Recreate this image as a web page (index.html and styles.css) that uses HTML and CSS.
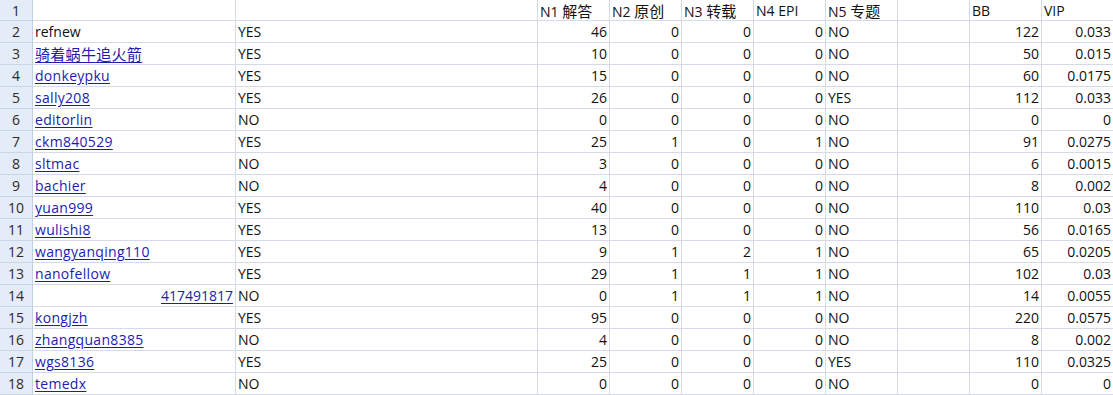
FILE: index.html
```html
<!DOCTYPE html>
<html lang="zh">
<head>
<meta charset="utf-8">
<title>Sheet</title>
<link rel="stylesheet" href="styles.css">
</head>
<body>
<div class="sheet">
  <div class="row first">
    <div class="rh">1</div><div class="c"></div><div class="c"></div>
    <div class="c">N1 <span class="cjk">解答</span></div><div class="c">N2 <span class="cjk">原创</span></div><div class="c">N3 <span class="cjk">转载</span></div><div class="c">N4 EPI</div><div class="c">N5 <span class="cjk">专题</span></div><div class="c"></div><div class="c">BB</div><div class="c">VIP</div>
  </div>
  <div class="row">
    <div class="rh">2</div><div class="c">refnew</div><div class="c">YES</div>
    <div class="c n">46</div><div class="c n">0</div><div class="c n">0</div><div class="c n">0</div><div class="c">NO</div><div class="c"></div><div class="c n">122</div><div class="c n">0.033</div>
  </div>
  <div class="row">
    <div class="rh">3</div><div class="c"><a class="lnk cjk">骑着蜗牛追火箭</a></div><div class="c">YES</div>
    <div class="c n">10</div><div class="c n">0</div><div class="c n">0</div><div class="c n">0</div><div class="c">NO</div><div class="c"></div><div class="c n">50</div><div class="c n">0.015</div>
  </div>
  <div class="row">
    <div class="rh">4</div><div class="c"><a class="lnk">donkeypku</a></div><div class="c">YES</div>
    <div class="c n">15</div><div class="c n">0</div><div class="c n">0</div><div class="c n">0</div><div class="c">NO</div><div class="c"></div><div class="c n">60</div><div class="c n">0.0175</div>
  </div>
  <div class="row">
    <div class="rh">5</div><div class="c"><a class="lnk">sally208</a></div><div class="c">YES</div>
    <div class="c n">26</div><div class="c n">0</div><div class="c n">0</div><div class="c n">0</div><div class="c">YES</div><div class="c"></div><div class="c n">112</div><div class="c n">0.033</div>
  </div>
  <div class="row">
    <div class="rh">6</div><div class="c"><a class="lnk">editorlin</a></div><div class="c">NO</div>
    <div class="c n">0</div><div class="c n">0</div><div class="c n">0</div><div class="c n">0</div><div class="c">NO</div><div class="c"></div><div class="c n">0</div><div class="c n">0</div>
  </div>
  <div class="row">
    <div class="rh">7</div><div class="c"><a class="lnk">ckm840529</a></div><div class="c">YES</div>
    <div class="c n">25</div><div class="c n">1</div><div class="c n">0</div><div class="c n">1</div><div class="c">NO</div><div class="c"></div><div class="c n">91</div><div class="c n">0.0275</div>
  </div>
  <div class="row">
    <div class="rh">8</div><div class="c"><a class="lnk">sltmac</a></div><div class="c">NO</div>
    <div class="c n">3</div><div class="c n">0</div><div class="c n">0</div><div class="c n">0</div><div class="c">NO</div><div class="c"></div><div class="c n">6</div><div class="c n">0.0015</div>
  </div>
  <div class="row">
    <div class="rh">9</div><div class="c"><a class="lnk">bachier</a></div><div class="c">NO</div>
    <div class="c n">4</div><div class="c n">0</div><div class="c n">0</div><div class="c n">0</div><div class="c">NO</div><div class="c"></div><div class="c n">8</div><div class="c n">0.002</div>
  </div>
  <div class="row">
    <div class="rh">10</div><div class="c"><a class="lnk">yuan999</a></div><div class="c">YES</div>
    <div class="c n">40</div><div class="c n">0</div><div class="c n">0</div><div class="c n">0</div><div class="c">NO</div><div class="c"></div><div class="c n">110</div><div class="c n">0.03</div>
  </div>
  <div class="row">
    <div class="rh">11</div><div class="c"><a class="lnk">wulishi8</a></div><div class="c">YES</div>
    <div class="c n">13</div><div class="c n">0</div><div class="c n">0</div><div class="c n">0</div><div class="c">NO</div><div class="c"></div><div class="c n">56</div><div class="c n">0.0165</div>
  </div>
  <div class="row">
    <div class="rh">12</div><div class="c"><a class="lnk">wangyanqing110</a></div><div class="c">YES</div>
    <div class="c n">9</div><div class="c n">1</div><div class="c n">2</div><div class="c n">1</div><div class="c">NO</div><div class="c"></div><div class="c n">65</div><div class="c n">0.0205</div>
  </div>
  <div class="row">
    <div class="rh">13</div><div class="c"><a class="lnk">nanofellow</a></div><div class="c">YES</div>
    <div class="c n">29</div><div class="c n">1</div><div class="c n">1</div><div class="c n">1</div><div class="c">NO</div><div class="c"></div><div class="c n">102</div><div class="c n">0.03</div>
  </div>
  <div class="row">
    <div class="rh">14</div><div class="c n"><a class="lnk num">417491817</a></div><div class="c">NO</div>
    <div class="c n">0</div><div class="c n">1</div><div class="c n">1</div><div class="c n">1</div><div class="c">NO</div><div class="c"></div><div class="c n">14</div><div class="c n">0.0055</div>
  </div>
  <div class="row">
    <div class="rh">15</div><div class="c"><a class="lnk">kongjzh</a></div><div class="c">YES</div>
    <div class="c n">95</div><div class="c n">0</div><div class="c n">0</div><div class="c n">0</div><div class="c">NO</div><div class="c"></div><div class="c n">220</div><div class="c n">0.0575</div>
  </div>
  <div class="row">
    <div class="rh">16</div><div class="c"><a class="lnk">zhangquan8385</a></div><div class="c">NO</div>
    <div class="c n">4</div><div class="c n">0</div><div class="c n">0</div><div class="c n">0</div><div class="c">NO</div><div class="c"></div><div class="c n">8</div><div class="c n">0.002</div>
  </div>
  <div class="row">
    <div class="rh">17</div><div class="c"><a class="lnk">wgs8136</a></div><div class="c">YES</div>
    <div class="c n">25</div><div class="c n">0</div><div class="c n">0</div><div class="c n">0</div><div class="c">YES</div><div class="c"></div><div class="c n">110</div><div class="c n">0.0325</div>
  </div>
  <div class="row">
    <div class="rh">18</div><div class="c"><a class="lnk">temedx</a></div><div class="c">NO</div>
    <div class="c n">0</div><div class="c n">0</div><div class="c n">0</div><div class="c n">0</div><div class="c">NO</div><div class="c"></div><div class="c n">0</div><div class="c n">0</div>
  </div>
</div>
</body>
</html>
```
FILE: styles.css
```css
html, body {
  margin: 0;
  padding: 0;
  background: #ffffff;
}
.sheet {
  width: 1114px;
  font-family: "Open Sans", "Noto Sans CJK SC", sans-serif;
  font-size: 14px;
  color: #111111;
}
.row {
  display: grid;
  grid-template-columns: 33px 203px 302px repeat(8, 72px);
  height: 22px;
}
.row.first {
  height: 21px;
}
.c, .rh {
  box-sizing: border-box;
  border-right: 1px solid #d4dae6;
  border-bottom: 1px solid #d4dae6;
  display: block;
  text-align: left;
  padding: 1px 2px 0 2px;
  white-space: nowrap;
  overflow: hidden;
  line-height: 20px;
}
.rh {
  background: #e4ecf7;
  border-right: 1px solid #c3d0e2;
  border-bottom: 1px solid #c9d6e8;
  text-align: center;
  color: #2b2b2b;
  padding: 1px 0 0 0;
}
.n {
  text-align: right;
}
.cjk {
  font-size: 15px;
}
.lnk {
  color: #1c1cb0;
  text-decoration: underline;
  text-underline-offset: 2px;
  letter-spacing: 0.3px;
}
.lnk.num {
  letter-spacing: 0;
}
```
